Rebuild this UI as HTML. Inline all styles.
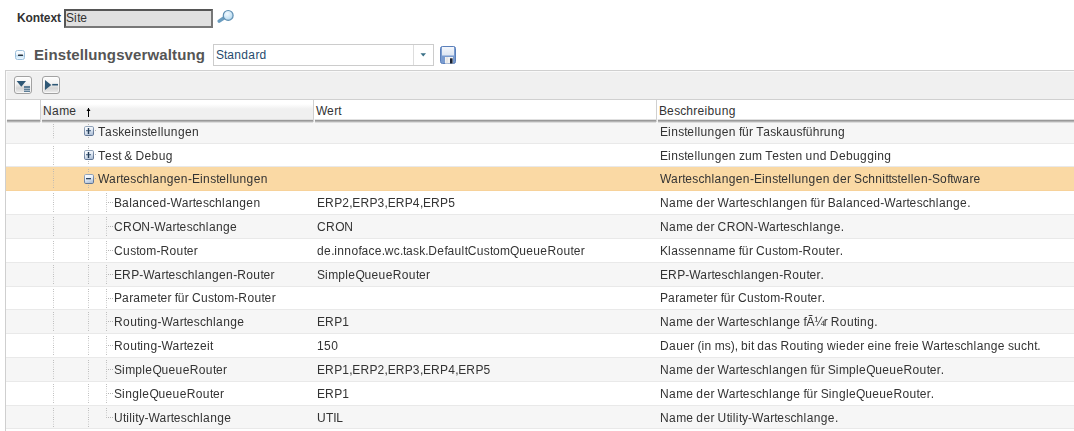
<!DOCTYPE html>
<html><head><meta charset="utf-8">
<style>
*{margin:0;padding:0;box-sizing:border-box}
html,body{width:1074px;height:431px;overflow:hidden;background:#fff;font-family:"Liberation Sans",sans-serif;font-size:12px;color:#333;font-kerning:none}
.abs{position:absolute}
i{display:inline-block;font-style:normal;letter-spacing:0;overflow:visible}
#klabel{left:17px;top:11px;font-weight:bold;font-size:12px;color:#333;line-height:14px;letter-spacing:-0.12px}
#kinput{left:64px;top:9px;width:149px;height:19px;background:#e0e0e0;border:2px solid #666;border-top-color:#555;border-left-color:#555;border-right-color:#777;border-bottom-color:#777}
#ktext{left:66px;white-space:nowrap;top:11px;line-height:14px;color:#333;letter-spacing:0px}
#title{left:34px;top:46px;font-weight:bold;font-size:15px;color:#555;line-height:17px;letter-spacing:0.12px}
#combo{left:213px;top:44px;width:221px;height:22px;border:1px solid #ccc;background:#fff}
#combo .sep{position:absolute;left:199px;top:0;width:1px;height:20px;background:#ddd}
#ctext{left:216px;white-space:nowrap;top:48px;color:#274b6d;line-height:14px;letter-spacing:0px}
#panel{left:5px;top:70px;width:1069px;height:361px;border:1px solid #d0d0d0;border-right:none;border-bottom:none;background:#fff}
#tbar{left:6px;top:71px;width:1068px;height:29px;background:#f0f0f0;border-bottom:1px solid #d0d0d0;box-shadow:inset 1px 1px 0 #f9f9f9}
.btn{position:absolute;width:18px;height:18px;border:1px solid #a2a2a2;border-radius:3px;box-shadow:inset 0 0 0 1px rgba(255,255,255,0.6);background:linear-gradient(#fcfcfc,#f3f3f3 40%,#d6d6d6 70%,#e6e6e6 90%,#efefef)}
#hdr{left:6px;top:100px;width:1068px;height:20px;background:#fff}
.hdrb{top:119px;height:4px;z-index:5;background:linear-gradient(#e0e0e0 0,#e0e0e0 25%,#999 25%,#999 50%,#b4b4b4 50%,#b4b4b4 75%,#dcdcdc 75%)}
.hc{position:absolute;top:0;height:19px;border-left:1px solid #d0d0d0;line-height:22px;padding-left:2px;color:#333;white-space:nowrap}
.row{position:absolute;left:5px;width:1069px;border-bottom:1px solid #e9e9e9}
.row.alt{background:#f6f6f6}
.row.sel{background:#fad9a4;border-bottom-color:#f7d29a}
.c{position:absolute;top:1px;white-space:nowrap;line-height:22px;color:#333;letter-spacing:0px}
.vl{position:absolute;width:1px;background-image:linear-gradient(#b4b4b4 50%,transparent 50%);background-size:1px 2.25px}
.ex{position:absolute}
.hl{position:absolute;height:1px;background-image:linear-gradient(90deg,#b4b4b4 50%,transparent 50%);background-size:2px 1px}
.exp{position:absolute;width:10px;height:10px;border:1px solid #8da3bd;border-radius:2px;background:linear-gradient(#f2f6fb,#c3d2e4)}
.exp:before{content:"";position:absolute;left:1px;top:3px;width:6px;height:2px;background:#33455a}
.exp.plus:after{content:"";position:absolute;left:3px;top:1px;width:2px;height:6px;background:#33455a}
</style></head><body>
<svg width="0" height="0" style="position:absolute"><defs><linearGradient id="eg" x1="0" y1="0" x2="0.4" y2="1"><stop offset="0" stop-color="#ffffff"/><stop offset="0.5" stop-color="#e9f0f9"/><stop offset="1" stop-color="#b3c4da"/></linearGradient><linearGradient id="eb" x1="0" y1="0" x2="0.3" y2="1"><stop offset="0" stop-color="#9aabc0"/><stop offset="1" stop-color="#5f7493"/></linearGradient></defs></svg>
<div id="klabel" class="abs">Kontext</div>
<div id="kinput" class="abs"></div>
<div id="ktext" class="abs"><i style="width:8.07px">S</i><i style="width:3.07px">i</i><i style="width:3.07px">t</i><i style="width:7.07px">e</i></div>
<svg class="abs" style="left:217px;top:9px" width="18" height="16" viewBox="0 0 18 16">
  <defs><radialGradient id="mg" cx="0.4" cy="0.35" r="0.7"><stop offset="0" stop-color="#f2faff"/><stop offset="0.7" stop-color="#c6e2f4"/><stop offset="1" stop-color="#9cc4df"/></radialGradient></defs>
  <line x1="2.2" y1="12.2" x2="6.8" y2="9" stroke="#6b9dc0" stroke-width="3.4" stroke-linecap="round"/>
  <circle cx="11.2" cy="6.4" r="4.9" fill="url(#mg)" stroke="#5f8fb2" stroke-width="1.2"/>
</svg>
<svg class="abs" style="left:15px;top:50px" width="10" height="10" viewBox="0 0 10 10">
  <defs><linearGradient id="mi" x1="0" y1="0" x2="0" y2="1"><stop offset="0" stop-color="#fdfeff"/><stop offset="0.45" stop-color="#eef6fc"/><stop offset="0.55" stop-color="#c4e0f5"/><stop offset="0.75" stop-color="#d8ecfa"/><stop offset="1" stop-color="#f6fbff"/></linearGradient></defs>
  <rect x="0.5" y="0.5" width="9" height="9" rx="2" fill="url(#mi)" stroke="#9cbfdb"/>
  <rect x="3" y="4.5" width="5" height="1.6" rx="0.5" fill="#26323e"/>
</svg>
<div id="title" class="abs">Einstellungsverwaltung</div>
<div id="combo" class="abs"><div class="sep"></div></div>
<div id="ctext" class="abs"><i style="width:8.07px">S</i><i style="width:3.07px">t</i><i style="width:7.07px">a</i><i style="width:7.07px">n</i><i style="width:7.07px">d</i><i style="width:7.07px">a</i><i style="width:4.07px">r</i><i style="width:7.07px">d</i></div>
<svg class="abs" style="left:418px;top:52px" width="10" height="6"><path d="M2.5 1.3 L8 1.3 L5.25 4.6 Z" fill="#3a7087"/></svg>
<svg class="abs" style="left:440px;top:46px" width="16" height="18" viewBox="0 0 16 18">
  <defs><linearGradient id="sv" x1="0" y1="0" x2="0" y2="1"><stop offset="0" stop-color="#f4f7fc"/><stop offset="1" stop-color="#dde6f3"/></linearGradient></defs>
  <rect x="0.5" y="0.5" width="15" height="17" rx="2" fill="#7a9cd0" stroke="#5a7fba"/>
  <rect x="2" y="1" width="12" height="8.5" fill="url(#sv)"/>
  <rect x="5" y="11" width="8" height="6.5" fill="#f2f2f2"/>
  <rect x="6.5" y="11" width="1" height="6.5" fill="#dcdcdc"/>
  <rect x="10" y="12.3" width="2.6" height="5.2" fill="#1a2232"/>
</svg>
<div id="panel" class="abs"></div>
<div id="tbar" class="abs">
  <div class="btn" style="left:8px;top:5px"><svg width="16" height="16" style="position:absolute;left:0;top:0"><path d="M1.6 4 L11 4 L6.3 9.8 Z" fill="#2f5876"/><rect x="9" y="9" width="6" height="6" fill="#5f7f97"/><rect x="9" y="11" width="6" height="1" fill="#a9bac8"/><rect x="9" y="13" width="6" height="1" fill="#a9bac8"/></svg></div>
  <div class="btn" style="left:36px;top:5px"><svg width="16" height="16" style="position:absolute;left:0;top:0"><path d="M2 3 L8.3 8 L2 13 Z" fill="#2f5876"/><rect x="9.2" y="6.9" width="5.8" height="1.6" fill="#2f5876"/></svg></div>
</div>
<div id="hdr" class="abs">
  <div class="hc" style="left:0;width:34px;border-left:none"></div>
  <div class="hc" style="left:34px;width:273px;background:linear-gradient(#fff 0px,#fff 4px,#f0f0f0 9px,#f0f0f0)"><i style="width:9.07px">N</i><i style="width:7.07px">a</i><i style="width:10.07px">m</i><i style="width:7.07px">e</i></div>
  <div class="hc" style="left:307px;width:343px"><i style="width:11.07px">W</i><i style="width:7.07px">e</i><i style="width:4.07px">r</i><i style="width:3.07px">t</i></div>
  <div class="hc" style="left:650px;width:420px"><i style="width:8.07px">B</i><i style="width:7.07px">e</i><i style="width:6.07px">s</i><i style="width:6.07px">c</i><i style="width:7.07px">h</i><i style="width:4.07px">r</i><i style="width:7.07px">e</i><i style="width:3.07px">i</i><i style="width:7.07px">b</i><i style="width:7.07px">u</i><i style="width:7.07px">n</i><i style="width:7.07px">g</i></div>
</div>
<svg class="abs" style="left:86px;top:107px;z-index:6" width="5" height="11"><path d="M2.5 1 L2.5 10" stroke="#000" stroke-width="1"/><path d="M0.5 4 L2.5 1 L4.5 4 Z" fill="#000"/></svg>
<div class="abs hdrb" style="left:7px;width:33px"></div><div class="abs hdrb" style="left:42px;width:271px"></div><div class="abs hdrb" style="left:315px;width:341px"></div><div class="abs hdrb" style="left:658px;width:416px"></div><div class="abs" style="left:40px;top:119px;width:2px;height:3px;z-index:6;background:linear-gradient(90deg,#d4d4d4 50%,#f4f4f4 50%)"></div><div class="abs" style="left:313px;top:119px;width:2px;height:3px;z-index:6;background:linear-gradient(90deg,#d4d4d4 50%,#f4f4f4 50%)"></div><div class="abs" style="left:656px;top:119px;width:2px;height:3px;z-index:6;background:linear-gradient(90deg,#d4d4d4 50%,#f4f4f4 50%)"></div>
<div class="abs" style="left:5px;top:70px;width:1px;height:361px;background:#cfcfcf;z-index:7"></div>
<div id="rows" style="will-change:transform;position:absolute;left:0;top:0;width:1074px;height:431px">
<div class="row alt" style="top:120px;height:24px"><div class="vl" style="left:48px;top:4px;height:15px"></div><div class="vl" style="left:83px;top:4px;height:1px"></div><div class="vl" style="left:83px;top:17px;height:2px"></div><svg class="ex" style="left:79px;top:6px" width="10" height="10"><rect x="0.5" y="0.5" width="9" height="9" rx="1.3" fill="url(#eg)" stroke="url(#eb)"/><rect x="2" y="4" width="5" height="1.3" fill="#5f7896"/><rect x="3.8" y="2" width="1.4" height="6" fill="#253d58"/></svg><div class="hl" style="left:90px;top:10px;width:1px"></div><div class="c" style="left:93px"><i style="width:7.07px">T</i><i style="width:7.07px">a</i><i style="width:6.07px">s</i><i style="width:6.07px">k</i><i style="width:7.07px">e</i><i style="width:3.07px">i</i><i style="width:7.07px">n</i><i style="width:6.07px">s</i><i style="width:3.07px">t</i><i style="width:7.07px">e</i><i style="width:3.07px">l</i><i style="width:3.07px">l</i><i style="width:7.07px">u</i><i style="width:7.07px">n</i><i style="width:7.07px">g</i><i style="width:7.07px">e</i><i style="width:7.07px">n</i></div><div class="c" style="left:655px;"><i style="width:8.07px">E</i><i style="width:3.07px">i</i><i style="width:7.07px">n</i><i style="width:6.07px">s</i><i style="width:3.07px">t</i><i style="width:7.07px">e</i><i style="width:3.07px">l</i><i style="width:3.07px">l</i><i style="width:7.07px">u</i><i style="width:7.07px">n</i><i style="width:7.07px">g</i><i style="width:7.07px">e</i><i style="width:7.07px">n</i><i style="width:3.07px">&nbsp;</i><i style="width:3.07px">f</i><i style="width:7.07px">ü</i><i style="width:4.07px">r</i><i style="width:3.07px">&nbsp;</i><i style="width:7.07px">T</i><i style="width:7.07px">a</i><i style="width:6.07px">s</i><i style="width:6.07px">k</i><i style="width:7.07px">a</i><i style="width:7.07px">u</i><i style="width:6.07px">s</i><i style="width:3.07px">f</i><i style="width:7.07px">ü</i><i style="width:7.07px">h</i><i style="width:4.07px">r</i><i style="width:7.07px">u</i><i style="width:7.07px">n</i><i style="width:7.07px">g</i></div></div>
<div class="row " style="top:144px;height:23px"><div class="vl" style="left:48px;top:2px;height:19px"></div><div class="vl" style="left:83px;top:2px;height:3px"></div><div class="vl" style="left:83px;top:17px;height:4px"></div><svg class="ex" style="left:79px;top:6px" width="10" height="10"><rect x="0.5" y="0.5" width="9" height="9" rx="1.3" fill="url(#eg)" stroke="url(#eb)"/><rect x="2" y="4" width="5" height="1.3" fill="#5f7896"/><rect x="3.8" y="2" width="1.4" height="6" fill="#253d58"/></svg><div class="hl" style="left:90px;top:10px;width:1px"></div><div class="c" style="left:93px"><i style="width:7.07px">T</i><i style="width:7.07px">e</i><i style="width:6.07px">s</i><i style="width:3.07px">t</i><i style="width:3.07px">&nbsp;</i><i style="width:8.07px">&amp;</i><i style="width:3.07px">&nbsp;</i><i style="width:9.07px">D</i><i style="width:7.07px">e</i><i style="width:7.07px">b</i><i style="width:7.07px">u</i><i style="width:7.07px">g</i></div><div class="c" style="left:655px;"><i style="width:8.07px">E</i><i style="width:3.07px">i</i><i style="width:7.07px">n</i><i style="width:6.07px">s</i><i style="width:3.07px">t</i><i style="width:7.07px">e</i><i style="width:3.07px">l</i><i style="width:3.07px">l</i><i style="width:7.07px">u</i><i style="width:7.07px">n</i><i style="width:7.07px">g</i><i style="width:7.07px">e</i><i style="width:7.07px">n</i><i style="width:3.07px">&nbsp;</i><i style="width:6.07px">z</i><i style="width:7.07px">u</i><i style="width:10.07px">m</i><i style="width:3.07px">&nbsp;</i><i style="width:7.07px">T</i><i style="width:7.07px">e</i><i style="width:6.07px">s</i><i style="width:3.07px">t</i><i style="width:7.07px">e</i><i style="width:7.07px">n</i><i style="width:3.07px">&nbsp;</i><i style="width:7.07px">u</i><i style="width:7.07px">n</i><i style="width:7.07px">d</i><i style="width:3.07px">&nbsp;</i><i style="width:9.07px">D</i><i style="width:7.07px">e</i><i style="width:7.07px">b</i><i style="width:7.07px">u</i><i style="width:7.07px">g</i><i style="width:7.07px">g</i><i style="width:3.07px">i</i><i style="width:7.07px">n</i><i style="width:7.07px">g</i></div></div>
<div class="row sel" style="top:167px;height:24px"><div class="vl" style="left:48px;top:2px;height:19px"></div><div class="vl" style="left:83px;top:2px;height:4px"></div><div class="vl" style="left:83px;top:18px;height:3px"></div><svg class="ex" style="left:79px;top:7px" width="10" height="10"><rect x="0.5" y="0.5" width="9" height="9" rx="1.3" fill="url(#eg)" stroke="url(#eb)"/><rect x="2" y="4" width="5" height="1.3" fill="#2e4560"/></svg><div class="hl" style="left:90px;top:11px;width:1px"></div><div class="c" style="left:93px"><i style="width:11.07px">W</i><i style="width:7.07px">a</i><i style="width:4.07px">r</i><i style="width:3.07px">t</i><i style="width:7.07px">e</i><i style="width:6.07px">s</i><i style="width:6.07px">c</i><i style="width:7.07px">h</i><i style="width:3.07px">l</i><i style="width:7.07px">a</i><i style="width:7.07px">n</i><i style="width:7.07px">g</i><i style="width:7.07px">e</i><i style="width:7.07px">n</i><i style="width:4.07px">-</i><i style="width:8.07px">E</i><i style="width:3.07px">i</i><i style="width:7.07px">n</i><i style="width:6.07px">s</i><i style="width:3.07px">t</i><i style="width:7.07px">e</i><i style="width:3.07px">l</i><i style="width:3.07px">l</i><i style="width:7.07px">u</i><i style="width:7.07px">n</i><i style="width:7.07px">g</i><i style="width:7.07px">e</i><i style="width:7.07px">n</i></div><div class="c" style="left:655px;"><i style="width:11.07px">W</i><i style="width:7.07px">a</i><i style="width:4.07px">r</i><i style="width:3.07px">t</i><i style="width:7.07px">e</i><i style="width:6.07px">s</i><i style="width:6.07px">c</i><i style="width:7.07px">h</i><i style="width:3.07px">l</i><i style="width:7.07px">a</i><i style="width:7.07px">n</i><i style="width:7.07px">g</i><i style="width:7.07px">e</i><i style="width:7.07px">n</i><i style="width:4.07px">-</i><i style="width:8.07px">E</i><i style="width:3.07px">i</i><i style="width:7.07px">n</i><i style="width:6.07px">s</i><i style="width:3.07px">t</i><i style="width:7.07px">e</i><i style="width:3.07px">l</i><i style="width:3.07px">l</i><i style="width:7.07px">u</i><i style="width:7.07px">n</i><i style="width:7.07px">g</i><i style="width:7.07px">e</i><i style="width:7.07px">n</i><i style="width:3.07px">&nbsp;</i><i style="width:7.07px">d</i><i style="width:7.07px">e</i><i style="width:4.07px">r</i><i style="width:3.07px">&nbsp;</i><i style="width:8.07px">S</i><i style="width:6.07px">c</i><i style="width:7.07px">h</i><i style="width:7.07px">n</i><i style="width:3.07px">i</i><i style="width:3.07px">t</i><i style="width:3.07px">t</i><i style="width:6.07px">s</i><i style="width:3.07px">t</i><i style="width:7.07px">e</i><i style="width:3.07px">l</i><i style="width:3.07px">l</i><i style="width:7.07px">e</i><i style="width:7.07px">n</i><i style="width:4.07px">-</i><i style="width:8.07px">S</i><i style="width:7.07px">o</i><i style="width:3.07px">f</i><i style="width:3.07px">t</i><i style="width:9.07px">w</i><i style="width:7.07px">a</i><i style="width:4.07px">r</i><i style="width:7.07px">e</i></div></div>
<div class="row " style="top:191px;height:24px"><div class="vl" style="left:48px;top:2px;height:19px"></div><div class="vl" style="left:83px;top:2px;height:19px"></div><div class="vl" style="left:101px;top:2px;height:19px"></div><div class="hl" style="left:103px;top:11px;width:5px"></div><div class="c" style="left:109px;"><i style="width:8.07px">B</i><i style="width:7.07px">a</i><i style="width:3.07px">l</i><i style="width:7.07px">a</i><i style="width:7.07px">n</i><i style="width:6.07px">c</i><i style="width:7.07px">e</i><i style="width:7.07px">d</i><i style="width:4.07px">-</i><i style="width:11.07px">W</i><i style="width:7.07px">a</i><i style="width:4.07px">r</i><i style="width:3.07px">t</i><i style="width:7.07px">e</i><i style="width:6.07px">s</i><i style="width:6.07px">c</i><i style="width:7.07px">h</i><i style="width:3.07px">l</i><i style="width:7.07px">a</i><i style="width:7.07px">n</i><i style="width:7.07px">g</i><i style="width:7.07px">e</i><i style="width:7.07px">n</i></div><div class="c" style="left:312px;"><i style="width:8.07px">E</i><i style="width:9.07px">R</i><i style="width:8.07px">P</i><i style="width:7.07px">2</i><i style="width:3.07px">,</i><i style="width:8.07px">E</i><i style="width:9.07px">R</i><i style="width:8.07px">P</i><i style="width:7.07px">3</i><i style="width:3.07px">,</i><i style="width:8.07px">E</i><i style="width:9.07px">R</i><i style="width:8.07px">P</i><i style="width:7.07px">4</i><i style="width:3.07px">,</i><i style="width:8.07px">E</i><i style="width:9.07px">R</i><i style="width:8.07px">P</i><i style="width:7.07px">5</i></div><div class="c" style="left:655px;"><i style="width:9.07px">N</i><i style="width:7.07px">a</i><i style="width:10.07px">m</i><i style="width:7.07px">e</i><i style="width:3.07px">&nbsp;</i><i style="width:7.07px">d</i><i style="width:7.07px">e</i><i style="width:4.07px">r</i><i style="width:3.07px">&nbsp;</i><i style="width:11.07px">W</i><i style="width:7.07px">a</i><i style="width:4.07px">r</i><i style="width:3.07px">t</i><i style="width:7.07px">e</i><i style="width:6.07px">s</i><i style="width:6.07px">c</i><i style="width:7.07px">h</i><i style="width:3.07px">l</i><i style="width:7.07px">a</i><i style="width:7.07px">n</i><i style="width:7.07px">g</i><i style="width:7.07px">e</i><i style="width:7.07px">n</i><i style="width:3.07px">&nbsp;</i><i style="width:3.07px">f</i><i style="width:7.07px">ü</i><i style="width:4.07px">r</i><i style="width:3.07px">&nbsp;</i><i style="width:8.07px">B</i><i style="width:7.07px">a</i><i style="width:3.07px">l</i><i style="width:7.07px">a</i><i style="width:7.07px">n</i><i style="width:6.07px">c</i><i style="width:7.07px">e</i><i style="width:7.07px">d</i><i style="width:4.07px">-</i><i style="width:11.07px">W</i><i style="width:7.07px">a</i><i style="width:4.07px">r</i><i style="width:3.07px">t</i><i style="width:7.07px">e</i><i style="width:6.07px">s</i><i style="width:6.07px">c</i><i style="width:7.07px">h</i><i style="width:3.07px">l</i><i style="width:7.07px">a</i><i style="width:7.07px">n</i><i style="width:7.07px">g</i><i style="width:7.07px">e</i><i style="width:3.07px">.</i></div></div>
<div class="row alt" style="top:215px;height:24px"><div class="vl" style="left:48px;top:2px;height:19px"></div><div class="vl" style="left:83px;top:2px;height:19px"></div><div class="vl" style="left:101px;top:2px;height:19px"></div><div class="hl" style="left:103px;top:11px;width:5px"></div><div class="c" style="left:109px;"><i style="width:9.07px">C</i><i style="width:9.07px">R</i><i style="width:9.07px">O</i><i style="width:9.07px">N</i><i style="width:4.07px">-</i><i style="width:11.07px">W</i><i style="width:7.07px">a</i><i style="width:4.07px">r</i><i style="width:3.07px">t</i><i style="width:7.07px">e</i><i style="width:6.07px">s</i><i style="width:6.07px">c</i><i style="width:7.07px">h</i><i style="width:3.07px">l</i><i style="width:7.07px">a</i><i style="width:7.07px">n</i><i style="width:7.07px">g</i><i style="width:7.07px">e</i></div><div class="c" style="left:312px;"><i style="width:9.07px">C</i><i style="width:9.07px">R</i><i style="width:9.07px">O</i><i style="width:9.07px">N</i></div><div class="c" style="left:655px;"><i style="width:9.07px">N</i><i style="width:7.07px">a</i><i style="width:10.07px">m</i><i style="width:7.07px">e</i><i style="width:3.07px">&nbsp;</i><i style="width:7.07px">d</i><i style="width:7.07px">e</i><i style="width:4.07px">r</i><i style="width:3.07px">&nbsp;</i><i style="width:9.07px">C</i><i style="width:9.07px">R</i><i style="width:9.07px">O</i><i style="width:9.07px">N</i><i style="width:4.07px">-</i><i style="width:11.07px">W</i><i style="width:7.07px">a</i><i style="width:4.07px">r</i><i style="width:3.07px">t</i><i style="width:7.07px">e</i><i style="width:6.07px">s</i><i style="width:6.07px">c</i><i style="width:7.07px">h</i><i style="width:3.07px">l</i><i style="width:7.07px">a</i><i style="width:7.07px">n</i><i style="width:7.07px">g</i><i style="width:7.07px">e</i><i style="width:3.07px">.</i></div></div>
<div class="row " style="top:239px;height:24px"><div class="vl" style="left:48px;top:2px;height:19px"></div><div class="vl" style="left:83px;top:2px;height:19px"></div><div class="vl" style="left:101px;top:2px;height:19px"></div><div class="hl" style="left:103px;top:11px;width:5px"></div><div class="c" style="left:109px;"><i style="width:9.07px">C</i><i style="width:7.07px">u</i><i style="width:6.07px">s</i><i style="width:3.07px">t</i><i style="width:7.07px">o</i><i style="width:10.07px">m</i><i style="width:4.07px">-</i><i style="width:9.07px">R</i><i style="width:7.07px">o</i><i style="width:7.07px">u</i><i style="width:3.07px">t</i><i style="width:7.07px">e</i><i style="width:4.07px">r</i></div><div class="c" style="left:312px;"><i style="width:7.07px">d</i><i style="width:7.07px">e</i><i style="width:3.07px">.</i><i style="width:3.07px">i</i><i style="width:7.07px">n</i><i style="width:7.07px">n</i><i style="width:7.07px">o</i><i style="width:3.07px">f</i><i style="width:7.07px">a</i><i style="width:6.07px">c</i><i style="width:7.07px">e</i><i style="width:3.07px">.</i><i style="width:9.07px">w</i><i style="width:6.07px">c</i><i style="width:3.07px">.</i><i style="width:3.07px">t</i><i style="width:7.07px">a</i><i style="width:6.07px">s</i><i style="width:6.07px">k</i><i style="width:3.07px">.</i><i style="width:9.07px">D</i><i style="width:7.07px">e</i><i style="width:3.07px">f</i><i style="width:7.07px">a</i><i style="width:7.07px">u</i><i style="width:3.07px">l</i><i style="width:3.07px">t</i><i style="width:9.07px">C</i><i style="width:7.07px">u</i><i style="width:6.07px">s</i><i style="width:3.07px">t</i><i style="width:7.07px">o</i><i style="width:10.07px">m</i><i style="width:9.07px">Q</i><i style="width:7.07px">u</i><i style="width:7.07px">e</i><i style="width:7.07px">u</i><i style="width:7.07px">e</i><i style="width:9.07px">R</i><i style="width:7.07px">o</i><i style="width:7.07px">u</i><i style="width:3.07px">t</i><i style="width:7.07px">e</i><i style="width:4.07px">r</i></div><div class="c" style="left:655px;"><i style="width:8.07px">K</i><i style="width:3.07px">l</i><i style="width:7.07px">a</i><i style="width:6.07px">s</i><i style="width:6.07px">s</i><i style="width:7.07px">e</i><i style="width:7.07px">n</i><i style="width:7.07px">n</i><i style="width:7.07px">a</i><i style="width:10.07px">m</i><i style="width:7.07px">e</i><i style="width:3.07px">&nbsp;</i><i style="width:3.07px">f</i><i style="width:7.07px">ü</i><i style="width:4.07px">r</i><i style="width:3.07px">&nbsp;</i><i style="width:9.07px">C</i><i style="width:7.07px">u</i><i style="width:6.07px">s</i><i style="width:3.07px">t</i><i style="width:7.07px">o</i><i style="width:10.07px">m</i><i style="width:4.07px">-</i><i style="width:9.07px">R</i><i style="width:7.07px">o</i><i style="width:7.07px">u</i><i style="width:3.07px">t</i><i style="width:7.07px">e</i><i style="width:4.07px">r</i><i style="width:3.07px">.</i></div></div>
<div class="row alt" style="top:263px;height:24px"><div class="vl" style="left:48px;top:2px;height:19px"></div><div class="vl" style="left:83px;top:2px;height:19px"></div><div class="vl" style="left:101px;top:2px;height:19px"></div><div class="hl" style="left:103px;top:11px;width:5px"></div><div class="c" style="left:109px;"><i style="width:8.07px">E</i><i style="width:9.07px">R</i><i style="width:8.07px">P</i><i style="width:4.07px">-</i><i style="width:11.07px">W</i><i style="width:7.07px">a</i><i style="width:4.07px">r</i><i style="width:3.07px">t</i><i style="width:7.07px">e</i><i style="width:6.07px">s</i><i style="width:6.07px">c</i><i style="width:7.07px">h</i><i style="width:3.07px">l</i><i style="width:7.07px">a</i><i style="width:7.07px">n</i><i style="width:7.07px">g</i><i style="width:7.07px">e</i><i style="width:7.07px">n</i><i style="width:4.07px">-</i><i style="width:9.07px">R</i><i style="width:7.07px">o</i><i style="width:7.07px">u</i><i style="width:3.07px">t</i><i style="width:7.07px">e</i><i style="width:4.07px">r</i></div><div class="c" style="left:312px;"><i style="width:8.07px">S</i><i style="width:3.07px">i</i><i style="width:10.07px">m</i><i style="width:7.07px">p</i><i style="width:3.07px">l</i><i style="width:7.07px">e</i><i style="width:9.07px">Q</i><i style="width:7.07px">u</i><i style="width:7.07px">e</i><i style="width:7.07px">u</i><i style="width:7.07px">e</i><i style="width:9.07px">R</i><i style="width:7.07px">o</i><i style="width:7.07px">u</i><i style="width:3.07px">t</i><i style="width:7.07px">e</i><i style="width:4.07px">r</i></div><div class="c" style="left:655px;"><i style="width:8.07px">E</i><i style="width:9.07px">R</i><i style="width:8.07px">P</i><i style="width:4.07px">-</i><i style="width:11.07px">W</i><i style="width:7.07px">a</i><i style="width:4.07px">r</i><i style="width:3.07px">t</i><i style="width:7.07px">e</i><i style="width:6.07px">s</i><i style="width:6.07px">c</i><i style="width:7.07px">h</i><i style="width:3.07px">l</i><i style="width:7.07px">a</i><i style="width:7.07px">n</i><i style="width:7.07px">g</i><i style="width:7.07px">e</i><i style="width:7.07px">n</i><i style="width:4.07px">-</i><i style="width:9.07px">R</i><i style="width:7.07px">o</i><i style="width:7.07px">u</i><i style="width:3.07px">t</i><i style="width:7.07px">e</i><i style="width:4.07px">r</i><i style="width:3.07px">.</i></div></div>
<div class="row " style="top:287px;height:23px"><div class="vl" style="left:48px;top:2px;height:19px"></div><div class="vl" style="left:83px;top:2px;height:19px"></div><div class="vl" style="left:101px;top:2px;height:19px"></div><div class="hl" style="left:103px;top:11px;width:5px"></div><div class="c" style="left:109px;top:0"><i style="width:8.07px">P</i><i style="width:7.07px">a</i><i style="width:4.07px">r</i><i style="width:7.07px">a</i><i style="width:10.07px">m</i><i style="width:7.07px">e</i><i style="width:3.07px">t</i><i style="width:7.07px">e</i><i style="width:4.07px">r</i><i style="width:3.07px">&nbsp;</i><i style="width:3.07px">f</i><i style="width:7.07px">ü</i><i style="width:4.07px">r</i><i style="width:3.07px">&nbsp;</i><i style="width:9.07px">C</i><i style="width:7.07px">u</i><i style="width:6.07px">s</i><i style="width:3.07px">t</i><i style="width:7.07px">o</i><i style="width:10.07px">m</i><i style="width:4.07px">-</i><i style="width:9.07px">R</i><i style="width:7.07px">o</i><i style="width:7.07px">u</i><i style="width:3.07px">t</i><i style="width:7.07px">e</i><i style="width:4.07px">r</i></div><div class="c" style="left:655px;top:0"><i style="width:8.07px">P</i><i style="width:7.07px">a</i><i style="width:4.07px">r</i><i style="width:7.07px">a</i><i style="width:10.07px">m</i><i style="width:7.07px">e</i><i style="width:3.07px">t</i><i style="width:7.07px">e</i><i style="width:4.07px">r</i><i style="width:3.07px">&nbsp;</i><i style="width:3.07px">f</i><i style="width:7.07px">ü</i><i style="width:4.07px">r</i><i style="width:3.07px">&nbsp;</i><i style="width:9.07px">C</i><i style="width:7.07px">u</i><i style="width:6.07px">s</i><i style="width:3.07px">t</i><i style="width:7.07px">o</i><i style="width:10.07px">m</i><i style="width:4.07px">-</i><i style="width:9.07px">R</i><i style="width:7.07px">o</i><i style="width:7.07px">u</i><i style="width:3.07px">t</i><i style="width:7.07px">e</i><i style="width:4.07px">r</i><i style="width:3.07px">.</i></div></div>
<div class="row alt" style="top:310px;height:24px"><div class="vl" style="left:48px;top:2px;height:19px"></div><div class="vl" style="left:83px;top:2px;height:19px"></div><div class="vl" style="left:101px;top:2px;height:19px"></div><div class="hl" style="left:103px;top:11px;width:5px"></div><div class="c" style="left:109px;"><i style="width:9.07px">R</i><i style="width:7.07px">o</i><i style="width:7.07px">u</i><i style="width:3.07px">t</i><i style="width:3.07px">i</i><i style="width:7.07px">n</i><i style="width:7.07px">g</i><i style="width:4.07px">-</i><i style="width:11.07px">W</i><i style="width:7.07px">a</i><i style="width:4.07px">r</i><i style="width:3.07px">t</i><i style="width:7.07px">e</i><i style="width:6.07px">s</i><i style="width:6.07px">c</i><i style="width:7.07px">h</i><i style="width:3.07px">l</i><i style="width:7.07px">a</i><i style="width:7.07px">n</i><i style="width:7.07px">g</i><i style="width:7.07px">e</i></div><div class="c" style="left:312px;"><i style="width:8.07px">E</i><i style="width:9.07px">R</i><i style="width:8.07px">P</i><i style="width:7.07px">1</i></div><div class="c" style="left:655px;"><i style="width:9.07px">N</i><i style="width:7.07px">a</i><i style="width:10.07px">m</i><i style="width:7.07px">e</i><i style="width:3.07px">&nbsp;</i><i style="width:7.07px">d</i><i style="width:7.07px">e</i><i style="width:4.07px">r</i><i style="width:3.07px">&nbsp;</i><i style="width:11.07px">W</i><i style="width:7.07px">a</i><i style="width:4.07px">r</i><i style="width:3.07px">t</i><i style="width:7.07px">e</i><i style="width:6.07px">s</i><i style="width:6.07px">c</i><i style="width:7.07px">h</i><i style="width:3.07px">l</i><i style="width:7.07px">a</i><i style="width:7.07px">n</i><i style="width:7.07px">g</i><i style="width:7.07px">e</i><i style="width:3.07px">&nbsp;</i><i style="width:3.07px">f</i><i style="width:8.07px">Ã</i><i style="width:9.07px">¼</i><i style="width:4.07px">r</i><i style="width:3.07px">&nbsp;</i><i style="width:9.07px">R</i><i style="width:7.07px">o</i><i style="width:7.07px">u</i><i style="width:3.07px">t</i><i style="width:3.07px">i</i><i style="width:7.07px">n</i><i style="width:7.07px">g</i><i style="width:3.07px">.</i></div></div>
<div class="row " style="top:334px;height:24px"><div class="vl" style="left:48px;top:2px;height:19px"></div><div class="vl" style="left:83px;top:2px;height:19px"></div><div class="vl" style="left:101px;top:2px;height:19px"></div><div class="hl" style="left:103px;top:11px;width:5px"></div><div class="c" style="left:109px;"><i style="width:9.07px">R</i><i style="width:7.07px">o</i><i style="width:7.07px">u</i><i style="width:3.07px">t</i><i style="width:3.07px">i</i><i style="width:7.07px">n</i><i style="width:7.07px">g</i><i style="width:4.07px">-</i><i style="width:11.07px">W</i><i style="width:7.07px">a</i><i style="width:4.07px">r</i><i style="width:3.07px">t</i><i style="width:7.07px">e</i><i style="width:6.07px">z</i><i style="width:7.07px">e</i><i style="width:3.07px">i</i><i style="width:3.07px">t</i></div><div class="c" style="left:312px;"><i style="width:7.07px">1</i><i style="width:7.07px">5</i><i style="width:7.07px">0</i></div><div class="c" style="left:655px;"><i style="width:9.07px">D</i><i style="width:7.07px">a</i><i style="width:7.07px">u</i><i style="width:7.07px">e</i><i style="width:4.07px">r</i><i style="width:3.07px">&nbsp;</i><i style="width:4.07px">(</i><i style="width:3.07px">i</i><i style="width:7.07px">n</i><i style="width:3.07px">&nbsp;</i><i style="width:10.07px">m</i><i style="width:6.07px">s</i><i style="width:4.07px">)</i><i style="width:3.07px">,</i><i style="width:3.07px">&nbsp;</i><i style="width:7.07px">b</i><i style="width:3.07px">i</i><i style="width:3.07px">t</i><i style="width:3.07px">&nbsp;</i><i style="width:7.07px">d</i><i style="width:7.07px">a</i><i style="width:6.07px">s</i><i style="width:3.07px">&nbsp;</i><i style="width:9.07px">R</i><i style="width:7.07px">o</i><i style="width:7.07px">u</i><i style="width:3.07px">t</i><i style="width:3.07px">i</i><i style="width:7.07px">n</i><i style="width:7.07px">g</i><i style="width:3.07px">&nbsp;</i><i style="width:9.07px">w</i><i style="width:3.07px">i</i><i style="width:7.07px">e</i><i style="width:7.07px">d</i><i style="width:7.07px">e</i><i style="width:4.07px">r</i><i style="width:3.07px">&nbsp;</i><i style="width:7.07px">e</i><i style="width:3.07px">i</i><i style="width:7.07px">n</i><i style="width:7.07px">e</i><i style="width:3.07px">&nbsp;</i><i style="width:3.07px">f</i><i style="width:4.07px">r</i><i style="width:7.07px">e</i><i style="width:3.07px">i</i><i style="width:7.07px">e</i><i style="width:3.07px">&nbsp;</i><i style="width:11.07px">W</i><i style="width:7.07px">a</i><i style="width:4.07px">r</i><i style="width:3.07px">t</i><i style="width:7.07px">e</i><i style="width:6.07px">s</i><i style="width:6.07px">c</i><i style="width:7.07px">h</i><i style="width:3.07px">l</i><i style="width:7.07px">a</i><i style="width:7.07px">n</i><i style="width:7.07px">g</i><i style="width:7.07px">e</i><i style="width:3.07px">&nbsp;</i><i style="width:6.07px">s</i><i style="width:7.07px">u</i><i style="width:6.07px">c</i><i style="width:7.07px">h</i><i style="width:3.07px">t</i><i style="width:3.07px">.</i></div></div>
<div class="row alt" style="top:358px;height:24px"><div class="vl" style="left:48px;top:2px;height:19px"></div><div class="vl" style="left:83px;top:2px;height:19px"></div><div class="vl" style="left:101px;top:2px;height:19px"></div><div class="hl" style="left:103px;top:11px;width:5px"></div><div class="c" style="left:109px;"><i style="width:8.07px">S</i><i style="width:3.07px">i</i><i style="width:10.07px">m</i><i style="width:7.07px">p</i><i style="width:3.07px">l</i><i style="width:7.07px">e</i><i style="width:9.07px">Q</i><i style="width:7.07px">u</i><i style="width:7.07px">e</i><i style="width:7.07px">u</i><i style="width:7.07px">e</i><i style="width:9.07px">R</i><i style="width:7.07px">o</i><i style="width:7.07px">u</i><i style="width:3.07px">t</i><i style="width:7.07px">e</i><i style="width:4.07px">r</i></div><div class="c" style="left:312px;"><i style="width:8.07px">E</i><i style="width:9.07px">R</i><i style="width:8.07px">P</i><i style="width:7.07px">1</i><i style="width:3.07px">,</i><i style="width:8.07px">E</i><i style="width:9.07px">R</i><i style="width:8.07px">P</i><i style="width:7.07px">2</i><i style="width:3.07px">,</i><i style="width:8.07px">E</i><i style="width:9.07px">R</i><i style="width:8.07px">P</i><i style="width:7.07px">3</i><i style="width:3.07px">,</i><i style="width:8.07px">E</i><i style="width:9.07px">R</i><i style="width:8.07px">P</i><i style="width:7.07px">4</i><i style="width:3.07px">,</i><i style="width:8.07px">E</i><i style="width:9.07px">R</i><i style="width:8.07px">P</i><i style="width:7.07px">5</i></div><div class="c" style="left:655px;"><i style="width:9.07px">N</i><i style="width:7.07px">a</i><i style="width:10.07px">m</i><i style="width:7.07px">e</i><i style="width:3.07px">&nbsp;</i><i style="width:7.07px">d</i><i style="width:7.07px">e</i><i style="width:4.07px">r</i><i style="width:3.07px">&nbsp;</i><i style="width:11.07px">W</i><i style="width:7.07px">a</i><i style="width:4.07px">r</i><i style="width:3.07px">t</i><i style="width:7.07px">e</i><i style="width:6.07px">s</i><i style="width:6.07px">c</i><i style="width:7.07px">h</i><i style="width:3.07px">l</i><i style="width:7.07px">a</i><i style="width:7.07px">n</i><i style="width:7.07px">g</i><i style="width:7.07px">e</i><i style="width:7.07px">n</i><i style="width:3.07px">&nbsp;</i><i style="width:3.07px">f</i><i style="width:7.07px">ü</i><i style="width:4.07px">r</i><i style="width:3.07px">&nbsp;</i><i style="width:8.07px">S</i><i style="width:3.07px">i</i><i style="width:10.07px">m</i><i style="width:7.07px">p</i><i style="width:3.07px">l</i><i style="width:7.07px">e</i><i style="width:9.07px">Q</i><i style="width:7.07px">u</i><i style="width:7.07px">e</i><i style="width:7.07px">u</i><i style="width:7.07px">e</i><i style="width:9.07px">R</i><i style="width:7.07px">o</i><i style="width:7.07px">u</i><i style="width:3.07px">t</i><i style="width:7.07px">e</i><i style="width:4.07px">r</i><i style="width:3.07px">.</i></div></div>
<div class="row " style="top:382px;height:24px"><div class="vl" style="left:48px;top:2px;height:19px"></div><div class="vl" style="left:83px;top:2px;height:19px"></div><div class="vl" style="left:101px;top:2px;height:19px"></div><div class="hl" style="left:103px;top:11px;width:5px"></div><div class="c" style="left:109px;"><i style="width:8.07px">S</i><i style="width:3.07px">i</i><i style="width:7.07px">n</i><i style="width:7.07px">g</i><i style="width:3.07px">l</i><i style="width:7.07px">e</i><i style="width:9.07px">Q</i><i style="width:7.07px">u</i><i style="width:7.07px">e</i><i style="width:7.07px">u</i><i style="width:7.07px">e</i><i style="width:9.07px">R</i><i style="width:7.07px">o</i><i style="width:7.07px">u</i><i style="width:3.07px">t</i><i style="width:7.07px">e</i><i style="width:4.07px">r</i></div><div class="c" style="left:312px;"><i style="width:8.07px">E</i><i style="width:9.07px">R</i><i style="width:8.07px">P</i><i style="width:7.07px">1</i></div><div class="c" style="left:655px;"><i style="width:9.07px">N</i><i style="width:7.07px">a</i><i style="width:10.07px">m</i><i style="width:7.07px">e</i><i style="width:3.07px">&nbsp;</i><i style="width:7.07px">d</i><i style="width:7.07px">e</i><i style="width:4.07px">r</i><i style="width:3.07px">&nbsp;</i><i style="width:11.07px">W</i><i style="width:7.07px">a</i><i style="width:4.07px">r</i><i style="width:3.07px">t</i><i style="width:7.07px">e</i><i style="width:6.07px">s</i><i style="width:6.07px">c</i><i style="width:7.07px">h</i><i style="width:3.07px">l</i><i style="width:7.07px">a</i><i style="width:7.07px">n</i><i style="width:7.07px">g</i><i style="width:7.07px">e</i><i style="width:3.07px">&nbsp;</i><i style="width:3.07px">f</i><i style="width:7.07px">ü</i><i style="width:4.07px">r</i><i style="width:3.07px">&nbsp;</i><i style="width:8.07px">S</i><i style="width:3.07px">i</i><i style="width:7.07px">n</i><i style="width:7.07px">g</i><i style="width:3.07px">l</i><i style="width:7.07px">e</i><i style="width:9.07px">Q</i><i style="width:7.07px">u</i><i style="width:7.07px">e</i><i style="width:7.07px">u</i><i style="width:7.07px">e</i><i style="width:9.07px">R</i><i style="width:7.07px">o</i><i style="width:7.07px">u</i><i style="width:3.07px">t</i><i style="width:7.07px">e</i><i style="width:4.07px">r</i><i style="width:3.07px">.</i></div></div>
<div class="row alt" style="top:406px;height:23px"><div class="vl" style="left:48px;top:2px;height:19px"></div><div class="vl" style="left:83px;top:2px;height:19px"></div><div class="vl" style="left:101px;top:2px;height:10px"></div><div class="hl" style="left:103px;top:11px;width:5px"></div><div class="c" style="left:109px;"><i style="width:9.07px">U</i><i style="width:3.07px">t</i><i style="width:3.07px">i</i><i style="width:3.07px">l</i><i style="width:3.07px">i</i><i style="width:3.07px">t</i><i style="width:6.07px">y</i><i style="width:4.07px">-</i><i style="width:11.07px">W</i><i style="width:7.07px">a</i><i style="width:4.07px">r</i><i style="width:3.07px">t</i><i style="width:7.07px">e</i><i style="width:6.07px">s</i><i style="width:6.07px">c</i><i style="width:7.07px">h</i><i style="width:3.07px">l</i><i style="width:7.07px">a</i><i style="width:7.07px">n</i><i style="width:7.07px">g</i><i style="width:7.07px">e</i></div><div class="c" style="left:312px;"><i style="width:9.07px">U</i><i style="width:7.07px">T</i><i style="width:3.07px">I</i><i style="width:7.07px">L</i></div><div class="c" style="left:655px;"><i style="width:9.07px">N</i><i style="width:7.07px">a</i><i style="width:10.07px">m</i><i style="width:7.07px">e</i><i style="width:3.07px">&nbsp;</i><i style="width:7.07px">d</i><i style="width:7.07px">e</i><i style="width:4.07px">r</i><i style="width:3.07px">&nbsp;</i><i style="width:9.07px">U</i><i style="width:3.07px">t</i><i style="width:3.07px">i</i><i style="width:3.07px">l</i><i style="width:3.07px">i</i><i style="width:3.07px">t</i><i style="width:6.07px">y</i><i style="width:4.07px">-</i><i style="width:11.07px">W</i><i style="width:7.07px">a</i><i style="width:4.07px">r</i><i style="width:3.07px">t</i><i style="width:7.07px">e</i><i style="width:6.07px">s</i><i style="width:6.07px">c</i><i style="width:7.07px">h</i><i style="width:3.07px">l</i><i style="width:7.07px">a</i><i style="width:7.07px">n</i><i style="width:7.07px">g</i><i style="width:7.07px">e</i><i style="width:3.07px">.</i></div></div>
</div>
</body></html>
